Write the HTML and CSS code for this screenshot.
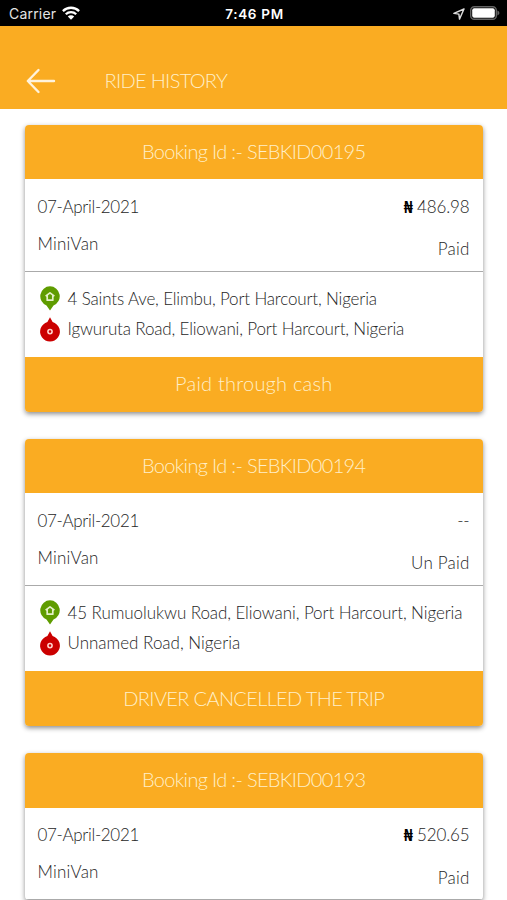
FILE: index.html
```html
<!DOCTYPE html>
<html lang="en">
<head>
<meta charset="utf-8">
<title>Ride History</title>
<link rel="stylesheet" href="styles.css">
</head>
<body>
<svg class="defs" aria-hidden="true">
  <symbol id="pickup" viewBox="0 0 20 25">
    <path fill="#5f9c00" d="M10 .3a9.9 9.9 0 0 1 3.5 19.1L10 24.6 6.5 19.4A9.9 9.9 0 0 1 10 .3z"/>
    <path fill="none" stroke="#e4f0c8" stroke-width="1.7" stroke-linejoin="round" d="M5.6 10.2 10 6.8l4.4 3.4M7.2 9.6v4.6h5.6V9.6"/>
  </symbol>
  <symbol id="drop" viewBox="0 0 20 25">
    <path fill="#cb0000" d="M10 .2l2.6 4.9a9.9 9.9 0 1 1-5.2 0z"/>
    <circle cx="10" cy="14.6" r="2.1" fill="none" stroke="#ffd0ca" stroke-width="1.6"/>
  </symbol>
</svg>
<header class="status">
  <div class="carrier">Carrier
    <svg class="wifi" viewBox="0 0 18 14"><g fill="none" stroke="#fff" stroke-width="2.3"><path d="M.9 5.1a11.5 11.5 0 0 1 16.2 0"/><path d="M3.8 8.3a7.4 7.4 0 0 1 10.4 0"/></g><path fill="#fff" d="M5.8 10.5a4.6 4.6 0 0 1 6.4 0L9 13.8z"/></svg>
  </div>
  <div class="clock">7:46 PM</div>
  <div class="indicators">
    <svg class="locate" viewBox="0 0 12 12"><path fill="none" stroke="#ddd" stroke-width="1.4" stroke-linejoin="round" d="M11 1 .9 5.4l5 .7.6 5z"/></svg>
    <svg class="battery" viewBox="0 0 30 14"><rect x=".7" y=".7" width="25.6" height="12.6" rx="3.6" fill="none" stroke="#646464" stroke-width="1.4"/><rect x="2.2" y="2.2" width="22.6" height="9.6" rx="2" fill="#fff"/><path fill="#646464" d="M27.4 4.6c2.6.8 2.6 4 0 4.8z"/></svg>
  </div>
</header>
<nav class="bar">
  <svg class="back" viewBox="0 0 30 26"><path fill="none" stroke="#fff3dc" stroke-width="2.4" stroke-linecap="round" stroke-linejoin="round" d="M12.5 2 1.8 13l10.7 11M2 13h26"/></svg>
  <h1 class="title">RIDE HISTORY</h1>
</nav>
<main class="list">
  <article class="card">
    <h2 class="band"><span class="booking">Booking Id :- SEBKID00195</span></h2>
    <section class="summary">
      <div class="left"><p class="date">07-April-2021</p><p class="vehicle">MiniVan</p></div>
      <div class="right"><p class="fare"><b>₦</b> 486.98</p><p class="state">Paid</p></div>
    </section>
    <section class="route">
      <div class="stops"><svg><use href="#pickup"/></svg><svg><use href="#drop"/></svg></div>
      <div class="places"><p class="long">4 Saints Ave, Elimbu, Port Harcourt, Nigeria</p><p class="long">Igwuruta Road, Eliowani, Port Harcourt, Nigeria</p></div>
    </section>
    <div class="band"><span class="cash">Paid through cash</span></div>
  </article>
  <article class="card">
    <h2 class="band"><span class="booking">Booking Id :- SEBKID00194</span></h2>
    <section class="summary">
      <div class="left"><p class="date">07-April-2021</p><p class="vehicle">MiniVan</p></div>
      <div class="right"><p class="fare">--</p><p class="state">Un Paid</p></div>
    </section>
    <section class="route">
      <div class="stops"><svg><use href="#pickup"/></svg><svg><use href="#drop"/></svg></div>
      <div class="places"><p class="longest">45 Rumuolukwu Road, Eliowani, Port Harcourt, Nigeria</p><p>Unnamed Road, Nigeria</p></div>
    </section>
    <div class="band"><span class="cancelled">DRIVER CANCELLED THE TRIP</span></div>
  </article>
  <article class="card">
    <h2 class="band"><span class="booking">Booking Id :- SEBKID00193</span></h2>
    <section class="summary">
      <div class="left"><p class="date">07-April-2021</p><p class="vehicle">MiniVan</p></div>
      <div class="right"><p class="fare"><b>₦</b> 520.65</p><p class="state">Paid</p></div>
    </section>
  </article>
</main>
</body>
</html>
```
FILE: styles.css
```css
* { box-sizing: border-box; }
body {
  display: flex;
  flex-direction: column;
  margin: 0;
  height: 900px;
  overflow: hidden;
  background: #fff;
  color: #262626;
  font: 300 17px/24px Lato, "Open Sans", sans-serif;
}
h1, h2, p { margin: 0; font-weight: 300; }
svg { display: block; }
.defs { display: none; }
.status {
  flex: none;
  display: grid;
  grid-template-columns: 1fr auto 1fr;
  align-items: center;
  height: 25.5px;
  padding: 2px 7px 0 9px;
  background: #000;
  color: #fff;
  font: 400 14px/22px Inter, sans-serif;
}
.carrier { display: flex; align-items: center; gap: 5.5px; color: #e4e4e4; letter-spacing: .2px; }
.wifi { width: 18px; height: 14px; margin-top: -2px; }
.clock { font-weight: 600; font-size: 13.5px; letter-spacing: .7px; }
.indicators { display: flex; justify-content: flex-end; align-items: center; gap: 5px; }
.locate { width: 12px; height: 12px; }
.battery { width: 30px; height: 14px; margin-top: -1px; }
.bar {
  flex: none;
  display: flex;
  align-items: flex-end;
  height: 83.5px;
  padding: 0 26px 15px;
  background: #faac22;
}
.back { width: 30px; height: 26px; }
.title { margin-left: 48.5px; font-size: 20px; line-height: 28px; letter-spacing: -.68px; color: #ffefc8; }
.list {
  flex: 1;
  min-height: 0;
  display: flex;
  flex-direction: column;
  gap: 27.25px;
  padding: 15.5px 24.5px 0 25px;
  overflow: hidden;
}
.card {
  flex: none;
  border-radius: 4px;
  overflow: hidden;
  background: #fff;
  box-shadow: 0 2px 5px rgba(0, 0, 0, .45);
}
.band {
  display: flex;
  align-items: center;
  justify-content: center;
  height: 54.5px;
  padding-bottom: 2px;
  background: #faac22;
  color: #ffefc8;
  font-size: 20px;
  line-height: 26px;
}
.booking { letter-spacing: -.68px; }
.cash { letter-spacing: .22px; }
.cancelled { letter-spacing: -.65px; }
.summary {
  display: flex;
  justify-content: space-between;
  height: 92.5px;
  padding: 15.5px 13px 0 12.5px;
  border-bottom: 1px solid #aaa;
}
.left { display: flex; flex-direction: column; gap: 13px; }
.right { display: flex; flex-direction: column; gap: 18.5px; text-align: right; }
.date { letter-spacing: -.33px; }
.vehicle { letter-spacing: .2px; }
.fare { letter-spacing: -.15px; }
.fare b { font: 700 16px/24px "Noto Sans", sans-serif; color: #000; }
.state { letter-spacing: .2px; }
.route { display: flex; gap: 8px; height: 85.5px; padding: 14.5px 12px 0 14.5px; }
.stops { display: flex; flex-direction: column; gap: 6px; }
.stops svg { width: 20px; height: 25px; }
.places { display: flex; flex-direction: column; gap: 6px; padding-top: .5px; white-space: nowrap; }
.long { letter-spacing: -.155px; }
.longest { letter-spacing: -.08px; }
```
